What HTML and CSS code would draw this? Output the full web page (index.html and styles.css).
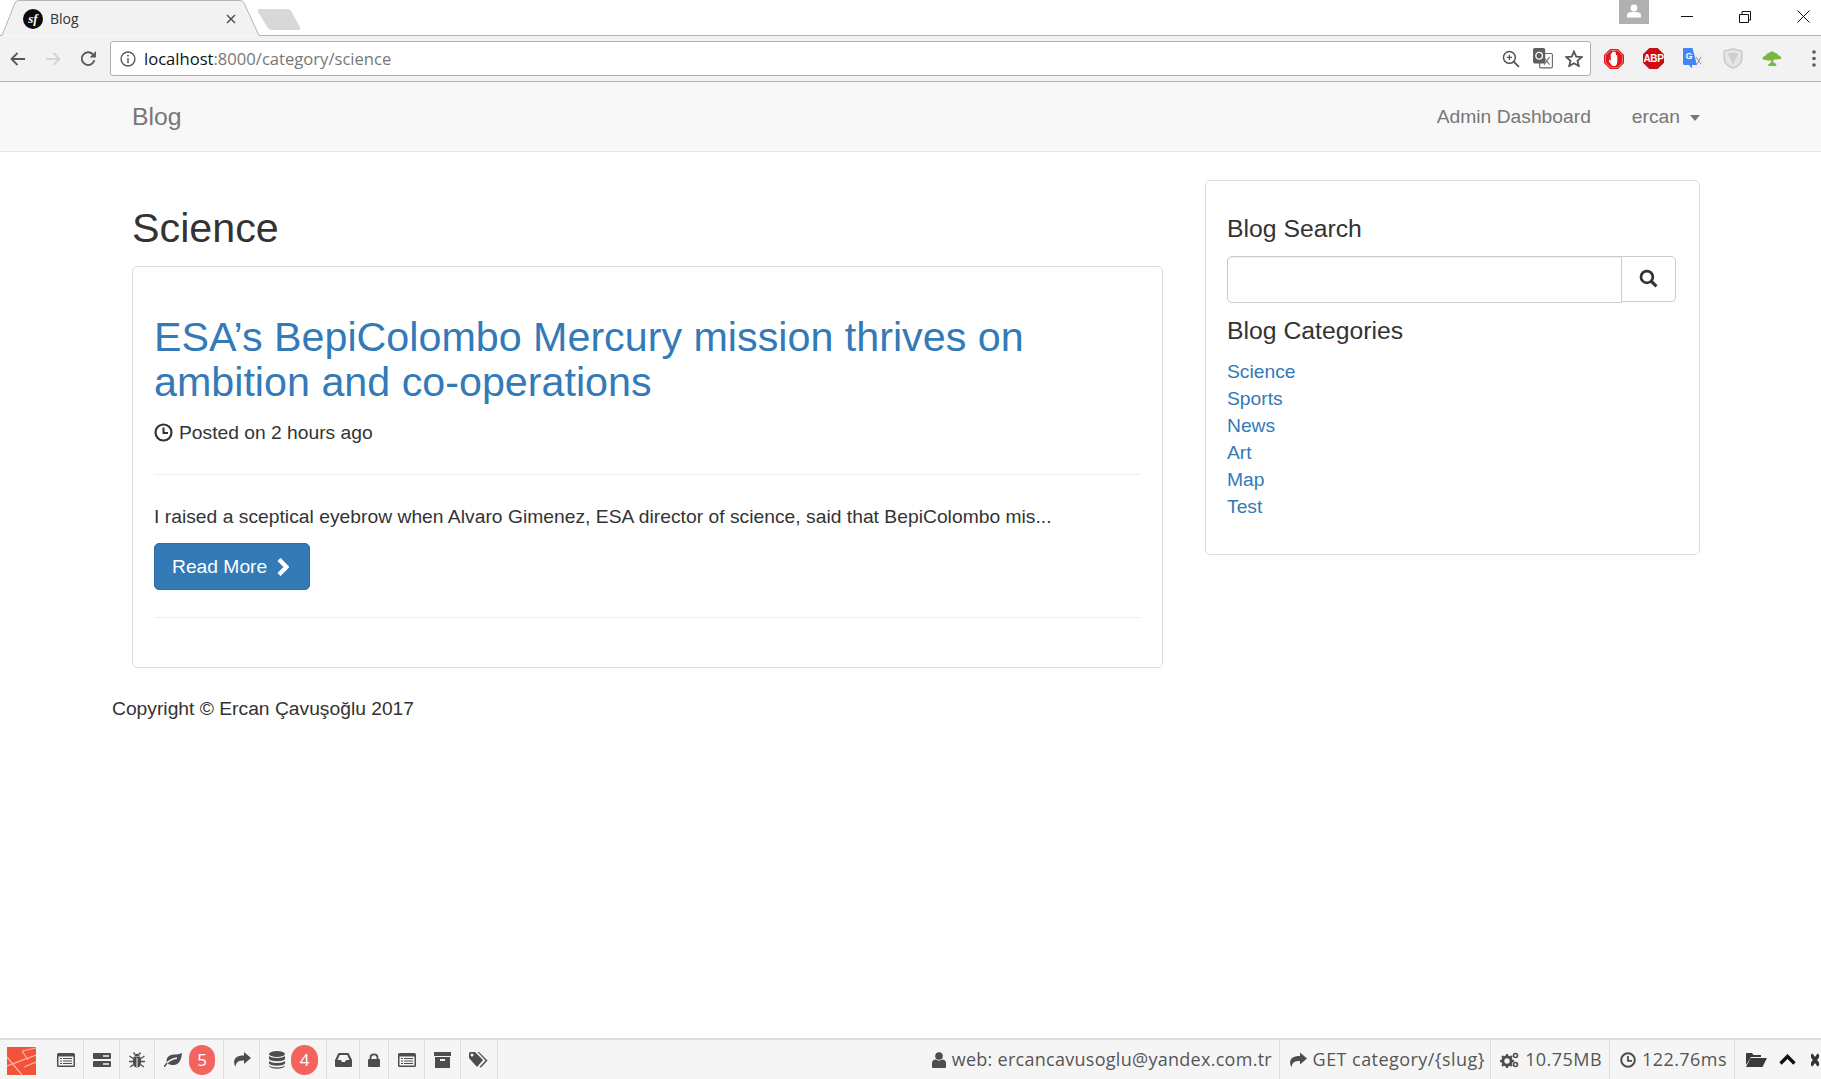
FILE: index.html
```html
<!DOCTYPE html>
<html lang="en">
<head>
<meta charset="utf-8">
<title>Blog</title>
<link rel="stylesheet" href="styles.css">
</head>
<body>
<header class="chrome">
  <div class="strip">
    <svg class="tabshape" width="302" height="36" viewBox="0 0 302 36"><path d="M0 35.5H2L15 3Q16 .5 19 .5H240Q243 .5 244 3L259 35.5H302" fill="#f2f2f2" stroke="#b3b3b3"/><path d="M260 9H287Q290 9 291 11L300 27Q301 30 298 30H272Q269 30 268 28L258 12Q257 9 260 9Z" fill="#d8d8d8"/></svg>
    <div class="tab">
      <span class="favicon">sf</span>
      <span class="tabtitle">Blog</span>
      <svg class="tabclose" width="10" height="10" viewBox="0 0 10 10"><path d="M1 1L9 9M9 1L1 9" stroke="#555" stroke-width="1.6"/></svg>
    </div>
    <div class="winctl">
      <div class="badge"><svg width="16" height="14" viewBox="0 0 16 14"><circle cx="8" cy="4" r="3.4" fill="#fff"/><path d="M1 13.5V11Q1 8.5 5 8H11Q15 8.5 15 11V13.5Z" fill="#fff"/></svg></div>
      <svg class="wmin" width="12" height="12" viewBox="0 0 12 12"><path d="M0 6.5H12" stroke="#111"/></svg>
      <svg class="wmax" width="12" height="12" viewBox="0 0 12 12"><path d="M.5 3.5H9.5V11.5H.5ZM3 3V.5H11.5V9H10" fill="none" stroke="#111"/></svg>
      <svg class="wclose" width="13" height="13" viewBox="0 0 13 13"><path d="M.5 .5L12.5 12.5M12.5 .5L.5 12.5" stroke="#111"/></svg>
    </div>
  </div>
  <div class="toolbar">
    <svg class="navicon" width="16" height="14" viewBox="0 0 16 14"><path d="M15 7H2M7.5 1L1.500 7L7.500 13" fill="none" stroke="#5a5a5a" stroke-width="1.8"/></svg>
    <svg class="navicon fwd" width="16" height="14" viewBox="0 0 16 14"><path d="M1 7H14M8.500 1L14.500 7L8.500 13" fill="none" stroke="#d4d4d4" stroke-width="1.8"/></svg>
    <svg class="navicon reload" width="17" height="17" viewBox="0 0 16 16"><path d="M13.500 9.500A6 6 0 1 1 12 4" fill="none" stroke="#5a5a5a" stroke-width="1.8"/><path d="M15 1V7H9Z" fill="#5a5a5a"/></svg>
    <div class="omnibox">
      <svg width="16" height="16" viewBox="0 0 15 15"><circle cx="7.500" cy="7.500" r="6.500" fill="none" stroke="#5a5a5a" stroke-width="1.300"/><path d="M7.500 6.500V11.500" stroke="#5a5a5a" stroke-width="1.400"/><circle cx="7.500" cy="4.300" r=".9" fill="#5a5a5a"/></svg>
      <span class="url"><span class="host">localhost</span>:8000/category/science</span>
      <svg class="omni-i zoomi" width="18" height="18" viewBox="0 0 17 17"><circle cx="7" cy="7" r="5.600" fill="none" stroke="#555" stroke-width="1.400"/><path d="M11 11L16 16" stroke="#555" stroke-width="1.800"/><path d="M4.500 7H9.500M7 4.500V9.500" stroke="#555" stroke-width="1.200"/></svg>
      <svg class="omni-i trans" width="20" height="21" viewBox="0 0 18 19"><rect x="6" y="5" width="11.500" height="13" rx="1" fill="#fff" stroke="#666"/><path d="M9.500 8L15 15M15 8L10 15" stroke="#777"/><rect width="11" height="14" rx="1.500" fill="#5e5e5e"/><circle cx="5.500" cy="7" r="3" fill="none" stroke="#fff" stroke-width="1.200"/></svg>
      <svg class="omni-i star" width="18" height="17" viewBox="0 0 18 17"><path d="M9 1.500L11.200 6.600L16.700 7.100L12.500 10.700L13.800 16L9 13.200L4.200 16L5.500 10.700L1.300 7.100L6.800 6.600Z" fill="none" stroke="#555" stroke-width="1.800"/></svg>
    </div>
    <div class="exts">
      <svg class="ext" width="20" height="20" viewBox="0 0 20 20"><path d="M6 0H14L20 6V14L14 20H6L0 14V6Z" fill="#e2181e"/><path d="M6.500 1.500H13.500L18.500 6.500V13.500L13.500 18.500H6.500L1.500 13.500V6.500Z" fill="none" stroke="#f9b0b0" stroke-width=".6"/><path d="M7.500 16C6 14 4.500 12 5 11C5.500 10.500 6.200 11 6.800 12V5C6.800 4 8 4 8 5V3.500C8 2.500 9.300 2.500 9.300 3.500V3C9.300 2 10.600 2 10.600 3V3.800C10.600 2.900 12 2.900 12 3.800V6.500C12 5.700 13.300 5.700 13.300 6.500V12C13.300 15 12.500 16.500 11 17H9C8.400 17 8 16.600 7.500 16Z" fill="#fff"/></svg>
      <div class="abp"><span>ABP</span></div>
      <svg class="ext g" width="21" height="21" viewBox="0 0 21 21"><rect x="9" y="5" width="11.500" height="15" fill="#eee"/><path d="M13 9L18 16M18 9L14 16" stroke="#8a97a8"/><path d="M0 0H9.500L14 17H9V20.500L6 17H1.500Q0 17 0 15.500Z" fill="#4285f4"/><text x="2.600" y="11" class="gtext">G</text></svg>
      <svg class="ext" width="20" height="21" viewBox="0 0 20 21"><path d="M10 1L18.800 3V10C18.800 15 14.500 18.500 10 20C5.500 18.500 1.200 15 1.200 10V3Z" fill="#e6e6e6" stroke="#c9c9c9" stroke-width="1.500"/><path d="M4.500 5.500L10 4.500L15.500 5.500L10 16.500Z" fill="#cfcfcf"/></svg>
      <svg class="ext" width="20" height="16" viewBox="0 0 20 16"><path d="M7 2C8 0 12 0 13 2C15 2 16 3 15.500 4C17 4 20 6.500 19.500 7.500C18 8.500 14 8.500 12 8.500C11 9.500 11 11 12 12C13 12 14 12.500 14.500 13.500L13.500 15H6.500L6 13.500C8 13 9 11.500 9.500 9.500C7 9.500 2 9.500 .5 8C0 6.500 3 4.500 4.500 4C4 3 5.500 2 7 2Z" fill="#77b843"/></svg>
    </div>
    <svg class="dots" width="4" height="17" viewBox="0 0 4 17"><circle cx="2" cy="2" r="1.800" fill="#5a5a5a"/><circle cx="2" cy="8.500" r="1.800" fill="#5a5a5a"/><circle cx="2" cy="15" r="1.800" fill="#5a5a5a"/></svg>
  </div>
</header>

<nav class="navbar">
  <a class="brand">Blog</a>
  <div class="navright">
    <a class="navlink">Admin Dashboard</a>
    <a class="navlink user">ercan<span class="caret"></span></a>
  </div>
</nav>

<main class="page">
  <div class="cols">
    <section class="maincol">
      <h1 class="pagetitle">Science</h1>
      <article class="panel post">
        <h2 class="posttitle">ESA’s BepiColombo Mercury mission thrives on ambition and co-operations</h2>
        <p class="meta"><svg class="clock" width="19" height="19" viewBox="0 0 19 19"><circle cx="9.500" cy="9.500" r="8" fill="none" stroke="#333" stroke-width="2.200"/><path d="M9.500 4.500V10H14" fill="none" stroke="#333" stroke-width="2"/></svg>Posted on 2 hours ago</p>
        <hr class="rule first">
        <p class="excerpt">I raised a sceptical eyebrow when Alvaro Gimenez, ESA director of science, said that BepiColombo mis...</p>
        <a class="btn">Read More<svg class="chev" width="13" height="18" viewBox="0 0 13 18"><path d="M3 1.500L10.500 9L3 16.500" fill="none" stroke="#fff" stroke-width="4.400"/></svg></a>
        <hr class="rule second">
      </article>
    </section>
    <aside class="panel side">
      <h4 class="sidehead">Blog Search</h4>
      <div class="searchgroup">
        <div class="searchinput"></div>
        <div class="searchbtn"><svg class="searchicon" width="19" height="19" viewBox="0 0 18 18"><circle cx="7.500" cy="7.500" r="5.600" fill="none" stroke="#333" stroke-width="2.600"/><path d="M11.500 11.500L16.500 16.500" stroke="#333" stroke-width="3"/></svg></div>
      </div>
      <h4 class="sidehead cats">Blog Categories</h4>
      <ul class="catlist">
        <li><a>Science</a></li>
        <li><a>Sports</a></li>
        <li><a>News</a></li>
        <li><a>Art</a></li>
        <li><a>Map</a></li>
        <li><a>Test</a></li>
      </ul>
    </aside>
  </div>
  <footer class="copy">Copyright © Ercan Çavuşoğlu 2017</footer>
</main>

<footer class="debugbar">
  <div class="logo"><svg width="29" height="28" viewBox="0 0 29 28"><rect width="29" height="28" fill="#f4533a"/><path d="M0 10L15 28M0 19L29 8M15 4L21 13M15 4L29 1M29 15L17 20" fill="none" stroke="#fbb7a8" stroke-width="1.200"/></svg></div>
  <div class="dtab t1"><svg width="18" height="14" viewBox="0 0 18 14"><rect width="18" height="14" rx="1.500" fill="#4d4d4d"/><rect x="1.500" y="3.500" width="15" height="9" fill="#f5f5f5"/><path d="M3 5.500H5M6 5.500H15M3 8H5M6 8H15M3 10.500H5M6 10.500H15" stroke="#4d4d4d"/></svg></div>
  <div class="dtab t2"><svg width="18" height="14" viewBox="0 0 18 14"><rect width="18" height="6" rx="1" fill="#4d4d4d"/><rect y="8" width="18" height="6" rx="1" fill="#4d4d4d"/><path d="M10 3H16M10 11H16" stroke="#f5f5f5" stroke-width="1.400"/></svg></div>
  <div class="dtab t3"><svg width="16" height="16" viewBox="0 0 16 16"><path d="M5 4.500H11L12 6.500V11C12 14 10 15.500 8 15.500C6 15.500 4 14 4 11V6.500Z" fill="#4d4d4d"/><path d="M5.500 4C5.500 1 10.500 1 10.500 4Z" fill="#4d4d4d"/><path d="M8 6V15" stroke="#f5f5f5"/><path d="M0.500 4L4 6.500M15.500 4L12 6.500M0 9.500H4M16 9.500H12M1 15L4.500 12.500M15 15L11.500 12.500M4.500 .500L6 2.500M11.500 .500L10 2.500" stroke="#4d4d4d" stroke-width="1.300"/></svg></div>
  <div class="dtab t4"><svg width="18" height="14" viewBox="0 0 18 14"><path d="M3 10C1.500 5 5 1.500 10 1.500C13 1.500 15 1.500 18 0C17.500 5 16 13 8 12C6 12 4.500 11 3 10Z" fill="#4d4d4d"/><path d="M0 14C3 8.500 7 6 13 5" fill="none" stroke="#f5f5f5" stroke-width="1.300"/><path d="M0 14L3 10" stroke="#4d4d4d" stroke-width="1.500"/></svg><span class="count c5">5</span></div>
  <div class="dtab t5"><svg width="18" height="15" viewBox="0 0 18 15"><path d="M11 0L18 6L11 12V8.500C6 8.500 3 9.500 2.500 15C-.5 9 1 3.500 11 3.500Z" fill="#4d4d4d"/></svg></div>
  <div class="dtab t6"><svg width="16" height="18" viewBox="0 0 16 18"><ellipse cx="8" cy="3" rx="8" ry="3" fill="#4d4d4d"/><path d="M0 5C2 7.500 14 7.500 16 5V8C14 11 2 11 0 8ZM0 10C2 12.500 14 12.500 16 10V12.500C14 15.500 2 15.500 0 12.500ZM0 14.500C2 17 14 17 16 14.500V15C14 18.600 2 18.600 0 15Z" fill="#4d4d4d"/></svg><span class="count c4">4</span></div>
  <div class="dtab t7"><svg width="17" height="14" viewBox="0 0 17 14"><path d="M3.500 0H13.500L17 7V13Q17 14 16 14H1Q0 14 0 13V7ZM4.800 2L2.500 7H6L7 9H10L11 7H14.500L12.200 2Z" fill="#4d4d4d" fill-rule="evenodd"/></svg></div>
  <div class="dtab t8"><svg width="12" height="14" viewBox="0 0 12 14"><rect y="6" width="12" height="8" rx="1" fill="#4d4d4d"/><path d="M2.500 7V4.200C2.500 .3 9.500 .3 9.500 4.200V7" fill="none" stroke="#4d4d4d" stroke-width="1.800"/></svg></div>
  <div class="dtab t9"><svg width="18" height="14" viewBox="0 0 18 14"><rect width="18" height="14" rx="1.500" fill="#4d4d4d"/><rect x="1.500" y="3.500" width="15" height="9" fill="#f5f5f5"/><path d="M3 5.500H5M6 5.500H15M3 8H5M6 8H15M3 10.500H5M6 10.500H15" stroke="#4d4d4d"/></svg></div>
  <div class="dtab t10"><svg width="17" height="16" viewBox="0 0 17 16"><rect width="17" height="4" fill="#4d4d4d"/><path d="M1 5H16V16H1ZM6 7V9H11V7Z" fill="#4d4d4d" fill-rule="evenodd"/></svg></div>
  <div class="dtab t11"><svg width="20" height="16" viewBox="0 0 20 16"><path d="M0 1.500Q0 0 1.500 0H6L14 8L8 15L0 6ZM3 4.500A1.500 1.500 0 1 0 3 1.500A1.500 1.500 0 0 0 3 4.500Z" fill="#4d4d4d" fill-rule="evenodd"/><path d="M8.500 0H10L18.500 8.500L12 15.500L10.500 15L16.500 8.500Z" fill="#4d4d4d"/></svg></div>
  <div class="dright">
    <div class="dinfo i1"><svg width="14" height="16" viewBox="0 0 14 16"><circle cx="7" cy="4" r="3.800" fill="#4d4d4d"/><path d="M0 15V11C0 8.500 2 7.500 4 7.500C6 9 8 9 10 7.500C12 7.500 14 8.500 14 11V15Q14 16 13 16H1Q0 16 0 15Z" fill="#4d4d4d"/></svg><span>web: ercancavusoglu@yandex.com.tr</span></div>
    <div class="dinfo i2"><svg width="18" height="16" viewBox="0 0 18 15"><path d="M11 0L18 6L11 12V8.500C6 8.500 3 9.500 2.500 15C-.5 9 1 3.500 11 3.500Z" fill="#4d4d4d"/></svg><span>GET category/{slug}</span></div>
    <div class="dinfo i3"><svg width="19" height="16" viewBox="0 0 19 16"><circle cx="7" cy="9" r="4.200" fill="none" stroke="#4d4d4d" stroke-width="3"/><path d="M7 2V4M7 14V16M0 9H2M12 9H14M2 4L3.500 5.500M12 4L10.500 5.500M2 14L3.500 12.500M12 14L10.500 12.500" stroke="#4d4d4d" stroke-width="2"/><circle cx="15.500" cy="3.500" r="2" fill="none" stroke="#4d4d4d" stroke-width="1.600"/><circle cx="15.500" cy="12.500" r="2" fill="none" stroke="#4d4d4d" stroke-width="1.600"/></svg><span>10.75MB</span></div>
    <div class="dinfo i4"><svg width="16" height="16" viewBox="0 0 16 16"><circle cx="8" cy="8" r="6.800" fill="none" stroke="#4d4d4d" stroke-width="2"/><path d="M8 4V8.800H12" fill="none" stroke="#4d4d4d" stroke-width="1.800"/></svg><span>122.76ms</span></div>
    <div class="dactions">
      <svg width="21" height="15" viewBox="0 0 21 15"><path d="M0 13V2Q0 1 1 1H6L7.500 3H15V5H5L0 13Z" fill="#3a3a3a"/><path d="M4.500 6H21L16.500 15H0Z" fill="#3a3a3a"/></svg>
      <svg class="chevup" width="17" height="11" viewBox="0 0 17 11"><path d="M1.500 9.500L8.500 2.500L15.500 9.500" fill="none" stroke="#111" stroke-width="3.400"/></svg>
      <svg class="xclose" width="8" height="14" viewBox="0 0 8 14"><path d="M0 1.500L8 12.500M0 12.500L8 1.500" stroke="#333" stroke-width="3.600"/></svg>
    </div>
  </div>
</footer>
</body>
</html>
```

FILE: styles.css
```css
* { box-sizing: border-box; }
html, body { margin: 0; height: 100%; }
body {
  display: flex;
  flex-direction: column;
  height: 1079px;
  overflow: hidden;
  background: #fff;
  color: #333;
  font-family: "Liberation Sans", Arial, sans-serif;
  font-size: 19.25px;
  line-height: 27px;
}

/* browser chrome */
.chrome { flex: none; font-family: "Open Sans", sans-serif; }
.strip { position: relative; height: 36px; display: flex; }
.tabshape { position: absolute; left: 0; top: 0; }
.strip::after { content: ""; position: absolute; left: 302px; right: 0; top: 35px; border-top: 1px solid #b3b3b3; }
.tab { position: relative; width: 240px; height: 35px; margin-left: 23px; display: flex; align-items: center; padding-top: 2px; }
.favicon {
  flex: none; width: 20px; height: 20px; border-radius: 50%;
  background: #0b0b0b; color: #fff;
  font: italic bold 13px/19px "Liberation Serif", serif;
  text-align: center;
}
.tabtitle { margin-left: 7px; font-size: 14px; line-height: 18px; color: #333; }
.tabclose { margin-left: 147px; }
.winctl { margin-left: auto; display: flex; align-items: flex-start; height: 35px; padding-right: 11px; }
.badge { width: 30px; height: 24px; background: #b0b0b0; display: flex; justify-content: center; padding-top: 4px; }
.wmin { margin: 10px 0 0 32px; }
.wmax { margin: 11px 0 0 46px; }
.wclose { margin: 10px 0 0 46px; }

.toolbar { height: 46px; background: #f2f2f2; border-bottom: 1px solid #b3b3b3; display: flex; align-items: center; padding-left: 10px; }
.navicon { flex: none; }
.fwd { margin-left: 19px; }
.reload { margin-left: 19px; }
.omnibox {
  margin-left: 13px; width: 1481px; height: 35px;
  background: #fff; border: 1px solid #b0b0b0; border-radius: 3px;
  display: flex; align-items: center; padding-left: 9px;
}
.url { margin-left: 8px; font-size: 16.6px; color: #777; white-space: nowrap; }
.host { color: #111; }
.omni-i { flex: none; }
.zoomi { margin-left: auto; }
.trans { margin-left: 13px; }
.star { margin-left: 12px; margin-right: 7px; }
.exts { display: flex; align-items: center; margin-left: 13px; }
.ext { flex: none; margin-right: 19px; }
.abp {
  width: 21px; height: 21px; margin-right: 19px;
  background: #cf0a12;
  clip-path: polygon(30% 0, 70% 0, 100% 30%, 100% 70%, 70% 100%, 30% 100%, 0 70%, 0 30%);
  display: flex; align-items: center; justify-content: center;
}
.abp span { font: bold 10px/1 "Liberation Sans", sans-serif; color: #fff; letter-spacing: -.3px; }
.gtext { font: bold 9px "Liberation Sans", sans-serif; fill: #fff; }
.dots { flex: none; margin-left: 11px; }

/* navbar */
.navbar {
  flex: none; height: 70px;
  background: #f8f8f8; border-bottom: 1px solid #e7e7e7;
  display: flex; align-items: center; justify-content: space-between;
  padding: 0 121px 0 132px;
  color: #777;
}
.brand { font-size: 24.75px; }
.navright { display: flex; gap: 41px; }
.caret {
  display: inline-block; margin-left: 10px; vertical-align: middle;
  border-top: 6px solid #777; border-left: 5.5px solid transparent; border-right: 5.5px solid transparent;
}

/* page */
.page { flex: 1; padding: 28px 121px 0 112px; }
.cols { display: flex; gap: 42px; padding-left: 20px; align-items: flex-start; }
.maincol { width: 1031px; }
.pagetitle { margin: 25px 0 0; font-size: 41.25px; line-height: 46px; font-weight: 400; }
.panel { border: 1px solid #ddd; border-radius: 5px; background: #fff; }
.post { margin-top: 15px; height: 402px; padding: 48px 21px 0; }
.posttitle { margin: 0; font-size: 41.25px; line-height: 45px; font-weight: 400; color: #337ab7; }
.meta { margin: 14px 0 0; display: flex; align-items: center; }
.clock { margin-right: 6px; }
.rule { border: 0; border-top: 1px solid #eee; margin: 0; }
.rule.first { margin-top: 28px; }
.excerpt { margin: 28px 0 0; white-space: nowrap; letter-spacing: .02px; }
.btn {
  display: inline-flex; align-items: center;
  margin-top: 13px; height: 47px; width: 156px; padding-left: 17px;
  background: #337ab7; border: 1px solid #2e6da4; border-radius: 5px; color: #fff;
}
.chev { margin-left: 9px; }
.rule.second { margin-top: 27px; }

.side { width: 495px; height: 375px; padding: 0 21px; }
.sidehead { margin: 0; font-size: 24.75px; line-height: 27px; font-weight: 400; }
.side > .sidehead:first-child { margin-top: 34px; }
.searchgroup { display: flex; margin-top: 14px; }
.searchinput { width: 395px; height: 47px; border: 1px solid #ccc; border-radius: 5px 0 0 5px; box-shadow: inset 0 1px 1px rgba(0,0,0,.075); }
.searchbtn { width: 54px; height: 46px; border: 1px solid #ccc; border-left: 0; border-radius: 0 5px 5px 0; display: flex; align-items: center; justify-content: center; padding-bottom: 2px; }
.sidehead.cats { margin-top: 14px; }
.catlist { list-style: none; margin: 14px 0 0; padding: 0; color: #337ab7; }

.copy { margin-top: 27px; }

/* debug bar */
.debugbar {
  flex: none; height: 41px;
  background: #f5f5f5; border-top: 2px solid #ddd;
  display: flex; align-items: stretch;
  font-family: "Open Sans", sans-serif;
  color: #555;
}
.logo { width: 42px; padding: 7px 0 0 7px; flex: none; }
.dtab { flex: none; display: flex; align-items: center; justify-content: center; border-right: 1px solid #ddd; }
.t1 { width: 42px; justify-content: flex-start; padding-left: 15px; }
.t2 { width: 36px; }
.t3 { width: 35px; }
.t4 { width: 69px; justify-content: flex-start; padding-left: 9px; }
.t5 { width: 36px; }
.t6 { width: 67px; justify-content: flex-start; padding-left: 9px; }
.t7 { width: 33px; }
.t8 { width: 29px; }
.t9 { width: 36px; }
.t10 { width: 36px; }
.t11 { width: 37px; }
.count {
  margin-left: 7px; height: 30px; border-radius: 15px;
  background: #f4645f; color: #fff; font-size: 17px; line-height: 30px; text-align: center;
}
.c5 { width: 26px; }
.c4 { width: 27px; margin-left: 6px; }
.dright { margin-left: auto; display: flex; }
.dinfo { display: flex; align-items: center; justify-content: flex-end; gap: 6px; font-size: 18px; letter-spacing: .45px; border-right: 1px solid #ddd; padding-right: 7px; white-space: nowrap; }
.i1 { letter-spacing: .28px; }
.i2 { width: 211px; padding-right: 5px; }
.i3 { width: 119px; }
.i4 { width: 125px; }
.dactions { width: 86px; display: flex; align-items: center; padding-left: 11px; overflow: hidden; }
.chevup { margin-left: 12px; flex: none; }
.xclose { margin-left: 15px; flex: none; }
```
